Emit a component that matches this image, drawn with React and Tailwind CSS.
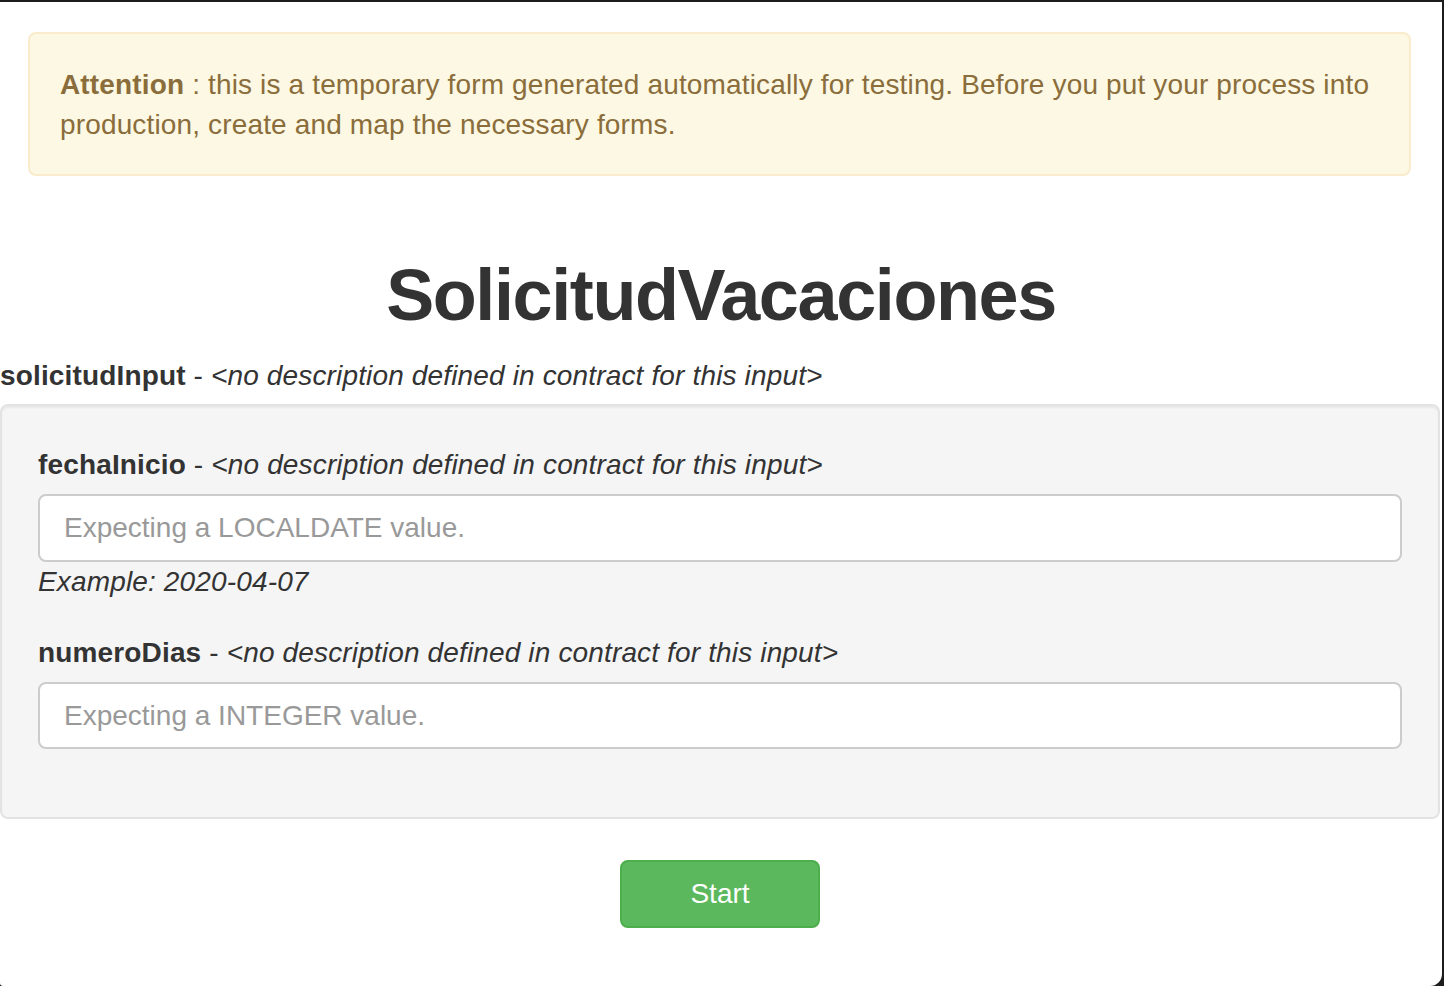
import React from 'react'

const fieldLabel = (name) => (
  <div className="text-[28px] leading-[40px] text-[#333] tracking-[0.15px]">
    <span className="font-bold">{name}</span> - <em>&lt;no description defined in contract for this input&gt;</em>
  </div>
)

export default function App() {
  return (
    <div className="h-[986px] w-full bg-[#1c1c1c] pt-[2px] pr-[2px] font-['Liberation_Sans',Arial,sans-serif]">
      <div className="h-[984px] bg-white rounded-br-[12px] rounded-bl-[3px] overflow-hidden">
        <div className="mt-[30px] ml-[28px] mr-[31px] pt-[31px] pb-[29px] px-[30px] border-2 border-[#faebcc] bg-[#fcf8e3] rounded-[8px] text-[28px] leading-[40px] text-[#8a6d3b] tracking-[0.15px]">
          <span className="font-bold">Attention</span> : this is a temporary form generated automatically for testing. Before you put your process into production, create and map the necessary forms.
        </div>

        <h1 className="mt-[80px] text-center text-[72px] leading-[79px] font-bold text-[#333] tracking-[-1.4px]">SolicitudVacaciones</h1>

        <div className="mt-[21px] mb-[8px]">{fieldLabel('solicitudInput')}</div>

        <div className="w-[1440px] pt-[39px] pb-[38px] px-[36px] border-2 border-[#e3e3e3] bg-[#f5f5f5] rounded-[8px] shadow-[inset_0_2px_2px_rgba(0,0,0,0.05)]">
          <div>
            <div className="mb-[9px]">{fieldLabel('fechaInicio')}</div>
            <input
              type="text"
              placeholder="Expecting a LOCALDATE value."
              className="block w-full h-[68px] px-[24px] bg-white border-2 border-[#ccc] rounded-[8px] text-[28px] text-[#555] placeholder:text-[#999] outline-none"
            />
            <div className="text-[28px] leading-[40px] italic text-[#333] tracking-[0.15px]">Example: 2020-04-07</div>
          </div>
          <div className="mt-[31px] mb-[30px]">
            <div className="mb-[9px]">{fieldLabel('numeroDias')}</div>
            <input
              type="text"
              placeholder="Expecting a INTEGER value."
              className="block w-full h-[67px] px-[24px] bg-white border-2 border-[#ccc] rounded-[8px] text-[28px] text-[#555] placeholder:text-[#999] outline-none"
            />
          </div>
        </div>

        <div className="mt-[41px] flex justify-center">
          <button
            type="button"
            className="w-[200px] h-[68px] bg-[#5cb85c] border-2 border-[#4cae4c] rounded-[8px] text-white text-[28px] leading-[40px] mr-[2px]"
          >
            Start
          </button>
        </div>
      </div>
    </div>
  )
}
